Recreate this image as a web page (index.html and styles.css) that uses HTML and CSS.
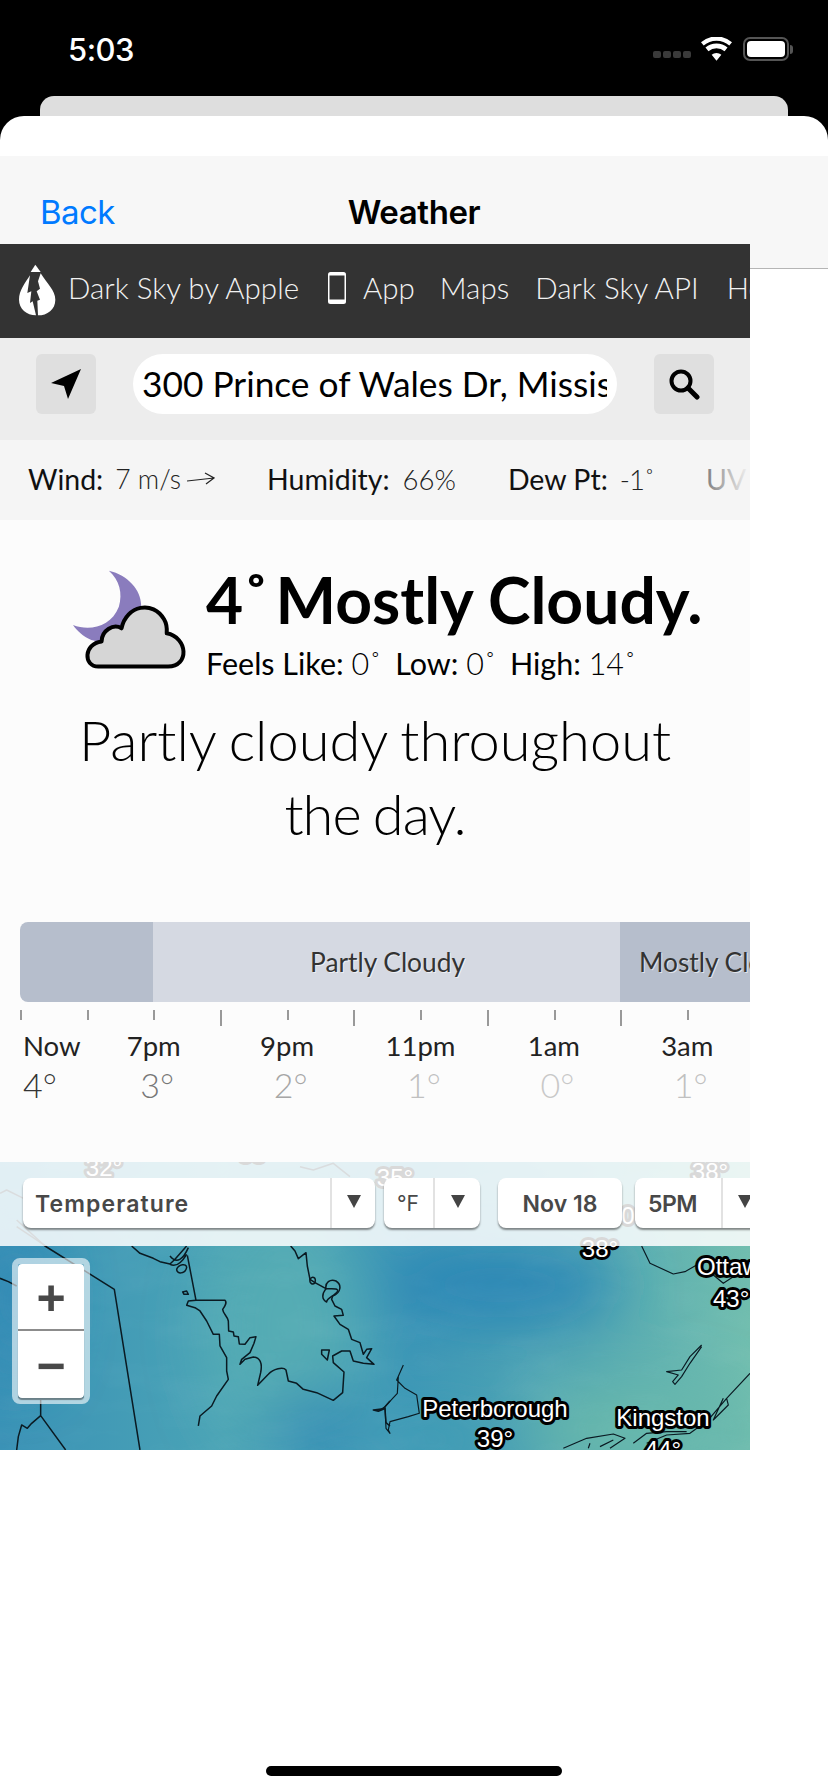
FILE: index.html
```html
<!DOCTYPE html>
<html lang="en">
<head>
<meta charset="utf-8">
<title>Weather</title>
<link rel="stylesheet" href="styles.css">
</head>
<body>
<div class="status">
  <span class="clock">5:03</span>
  <div class="status-icons">
    <div class="signal"><i></i><i></i><i></i><i></i></div>
    <svg class="wifi" viewBox="0 0 32 24"><path d="M16 24l-5-6a7.500 7.500 0 0 1 10 0zM7.700 14.200L4.600 10.500a17.500 17.500 0 0 1 22.800 0l-3.100 3.700a12.800 12.800 0 0 0-16.600 0zM2.800 8.300L0 5a24.500 24.500 0 0 1 32 0l-2.800 3.300a20.200 20.200 0 0 0-26.400 0z" fill="#fff"/></svg>
    <div class="battery"><div class="battery-fill"></div></div>
    <div class="battery-nub"></div>
  </div>
</div>
<div class="sheet-back"></div>
<div class="sheet">
  <div class="navbar">
    <span class="back">Back</span>
    <span class="nav-title">Weather</span>
    <span></span>
  </div>
  <main class="web">
    <nav class="site-nav">
      <svg class="logo" viewBox="0 0 180 192"><g fill="#fff"><path d="M76 20L92 42H62z"/><path d="M92 46C110 75 136 98 136 125 136 155 112 172 84 172L82 128 90 125 80 100 90 92 84 70z"/><path d="M60 52C45 75 27 98 27 125 27 152 50 172 78 172L68 130 60 135 64 100 52 105z"/></g></svg>
      <span class="nav-link brand">Dark Sky by Apple</span>
      <svg class="phone" viewBox="0 0 18 32"><rect width="18" height="32" rx="2.500" fill="#fff"/><rect x="1.500" y="3.500" width="15" height="24" fill="#333"/></svg>
      <span class="nav-link app">App</span>
      <span class="nav-link maps">Maps</span>
      <span class="nav-link api">Dark Sky API</span>
      <span class="nav-link help">Help</span>
    </nav>
    <div class="search">
      <button class="square-btn"><svg class="arrow-icon" viewBox="0 0 32 32"><path d="M31 1L1 15l13 3 4 13z" fill="#000"/></svg></button>
      <div class="address"><span class="address-text">300 Prince of Wales Dr, Mississauga, ON</span></div>
      <button class="square-btn"><svg class="search-icon" viewBox="0 0 32 32"><circle cx="13" cy="13" r="9.500" fill="none" stroke="#000" stroke-width="4"/><path d="M20 20l9 9" stroke="#000" stroke-width="5" stroke-linecap="round"/></svg></button>
    </div>
    <div class="stats">
      <div class="stat"><b>Wind:</b><span class="wind-value">7 m/s</span><svg class="wind-arrow" viewBox="0 0 28 14"><path d="M0 9l27-3M18 1l9 5-8 6" fill="none" stroke="#222" stroke-width="1.200"/></svg></div>
      <div class="stat"><b>Humidity:</b><span>66%</span></div>
      <div class="stat"><b>Dew Pt:</b><span class="dew-value">-1˚</span></div>
      <div class="stat"><b>UV Index:</b><span>0</span></div>
      <div class="stats-fade"></div>
    </div>
    <section class="summary">
      <div class="current">
        <svg class="weather-icon" viewBox="100 90 340 300"><path d="M208 92C265 105 305 150 305 195 305 250 230 320 155 300 130 290 112 272 100 255 150 275 215 260 238 200 250 160 240 120 208 92z" fill="#8a7cbd"/><path d="M176 380C131 380 131 312 186 305 186 272 221 250 246 265 261 195 341 180 374 238 384 255 382 280 382 280 446 292 451 380 386 380z" fill="#d6d6d6" stroke="#000" stroke-width="12" stroke-linejoin="round"/></svg>
        <div class="current-text">
          <h1 class="headline"><span class="deg">4˚ </span>Mostly Cloudy.</h1>
          <div class="feels"><b>Feels Like:</b> <span>0˚</span> <b class="gap">Low:</b> <span>0˚</span> <b class="gap">High:</b> <span>14˚</span></div>
        </div>
      </div>
      <p class="day-summary">Partly cloudy throughout <span class="tight">the day.</span></p>
    </section>
    <section class="timeline">
      <div class="bar">
        <div class="seg seg-dark seg-first"></div>
        <div class="seg seg-light"><span>Partly Cloudy</span></div>
        <div class="seg seg-dark seg-last"><span>Mostly Cloudy</span></div>
      </div>
      <div class="ticks">
        <i></i><i></i><i></i><i class="long"></i><i></i><i class="long"></i><i></i><i class="long"></i><i></i><i class="long"></i><i></i>
      </div>
      <div class="hours">
        <div class="hour now"><b>Now</b><span class="t1">4°</span></div>
        <div class="hour"><b>7pm</b><span class="t2">3°</span></div>
        <div class="hour"><b>9pm</b><span class="t3">2°</span></div>
        <div class="hour"><b>11pm</b><span class="t4">1°</span></div>
        <div class="hour"><b>1am</b><span class="t5">0°</span></div>
        <div class="hour"><b>3am</b><span class="t4">1°</span></div>
      </div>
    </section>
    <section class="map">
      <svg class="map-art" viewBox="0 1162 750 288" preserveAspectRatio="none">
        <defs>
          <linearGradient id="base" x1="0" y1="0" x2="1" y2="0">
            <stop offset="0" stop-color="#3a92b6"/><stop offset=".3" stop-color="#4ba4b6"/><stop offset=".55" stop-color="#3d97b6"/><stop offset=".8" stop-color="#56aab2"/><stop offset="1" stop-color="#70bdae"/>
          </linearGradient>
          <filter id="soft" x="-50%" y="-50%" width="200%" height="200%"><feGaussianBlur stdDeviation="30"/></filter>
          <filter id="grain" x="0" y="0" width="100%" height="100%"><feTurbulence type="fractalNoise" baseFrequency=".012 .035" numOctaves="3" seed="4"/><feColorMatrix values="0 0 0 0 1  0 0 0 0 1  0 0 0 0 1  1.400 0 0 0 -.55"/></filter>
        </defs>
        <rect x="0" y="1162" width="750" height="288" fill="url(#base)"/>
        <g filter="url(#soft)">
          <ellipse cx="285" cy="1330" rx="75" ry="120" fill="#55acb4"/>
          <ellipse cx="315" cy="1425" rx="45" ry="30" fill="#2f88b5"/>
          <ellipse cx="500" cy="1285" rx="120" ry="40" fill="#2b86b6"/>
          <ellipse cx="15" cy="1300" rx="35" ry="80" fill="#328ab5"/>
          <ellipse cx="640" cy="1430" rx="110" ry="45" fill="#68b8ac"/>
          <ellipse cx="430" cy="1440" rx="70" ry="25" fill="#439fb6"/>
        </g>
        <rect x="0" y="1162" width="750" height="288" filter="url(#grain)" opacity=".05"/>
        <g class="lines" transform="translate(0 1150) scale(.3333)">
          <path d="M50 210L135 288 343 418 420 900"/>
          <path d="M0 385L25 395 50 408"/>
          <path d="M122 750V797L197 900M122 797L95 820 82 835 65 825 55 860 50 900"/>
          <path d="M395 288L420 310 460 325 480 335 510 342 525 328 560 288"/>
          <path d="M0 130L20 120 60 140 120 170 170 175M900 50L940 60 1000 40 1050 80M1110 100L1200 90M50 230L140 290"/>
        </g>
        <g class="lines" transform="translate(170 1246) scale(.3333)">
          <path d="M52 28L78 163H165C172 170 165 180 158 190 160 205 172 210 175 225L176 255 190 258 192 270 205 272 208 294 225 295 240 275 258 272 252 292 240 320 215 340 210 355 225 340 250 333C270 335 278 350 272 380L263 418 295 385C310 368 340 362 348 372L355 405 380 412 400 430 440 440 490 463 518 440 522 378 490 350 488 330 515 315 540 315 550 345 580 352 612 355 590 335 605 308 590 310 580 325 570 290 545 280 535 250 510 235 492 210 520 208 515 190 495 180 485 160 488 150"/>
          <path d="M488 150C515 140 515 115 498 105 480 98 465 110 468 128L435 110 420 100 412 60 408 20 385 38 375 15 362 0"/>
          <path d="M468 128C480 130 505 125 503 135 495 150 470 155 470 168 455 160 455 145 468 128zM420 100C425 90 440 92 435 110 428 118 418 112 420 100z"/>
          <path d="M78 163L55 165 50 178 75 185 90 195 110 225 130 265 148 265 150 300 170 335 170 375 175 400 140 450 125 480 90 510 85 540"/>
          <path d="M38 138L50 135 55 145 42 145zM455 312L478 312 472 342 455 325zM20 70C25 55 50 50 50 65 45 85 20 85 20 70zM0 30C20 55 40 40 55 5M0 55C20 65 35 50 50 25"/>
          <path d="M660 465L640 488 610 492 625 496 645 488 648 530 660 540"/>
        </g>
        <g class="lines thin" transform="translate(380 1150) scale(.3333)">
          <path d="M70 645L50 690 75 715 110 735 118 790 85 800 30 815 25 840 30 850 18 835 15 770 0 780M55 680L52 730 15 770"/>
          <path d="M965 585L930 620 905 660 860 665 895 675 878 695 885 703 905 680 930 640 965 590"/>
          <path d="M1110 670L1040 745 985 810 930 850 860 855 800 880M1040 745L1045 765 1000 810 1030 745"/>
          <path d="M550 895L620 865 700 852 735 865 690 895M760 880L800 850 860 845 920 845M630 880L625 895M660 890L700 870"/>
          <path class="dash" d="M785 288L810 340 880 372 915 365 950 345M1000 375L1030 400 1060 380"/>
        </g>
        <g class="labels">
          <text x="104" y="1176">32°</text>
          <text x="252" y="1162">33</text>
          <text x="395" y="1186">35°</text>
          <text x="710" y="1180">38°</text>
          <text x="628" y="1224">0</text>
          <text x="600" y="1257">38°</text>
          <text class="start" x="697" y="1275">Ottawa</text>
          <text class="start" x="713" y="1307">43°</text>
          <text x="495" y="1417">Peterborough</text>
          <text x="495" y="1447">39°</text>
          <text x="663" y="1426">Kingston</text>
          <text x="663" y="1458">44°</text>
        </g>
      </svg>
      <div class="map-band">
        <div class="ctl ctl-metric"><b>Temperature</b><span class="caret"></span></div>
        <div class="ctl ctl-unit"><span class="unit">°F</span><span class="caret"></span></div>
        <div class="ctl ctl-date"><b>Nov 18</b></div>
        <div class="ctl ctl-time"><b>5PM</b><span class="caret"></span></div>
      </div>
      <div class="zoom-ctl">
        <div class="zoom-btn">+</div>
        <div class="zoom-btn">−</div>
      </div>
    </section>
  </main>
  <div class="home-area"><div class="home-bar"></div></div>
</div>
</body>
</html>
```
FILE: styles.css
```css
* { box-sizing: border-box; }
html, body { margin: 0; height: 100%; }
body { width: 828px; height: 1792px; background: #000; overflow: hidden; font-family: Lato, "Noto Sans", sans-serif; color: #000; display: flex; flex-direction: column; }

.status { height: 96px; flex: none; display: flex; justify-content: space-between; padding: 31px 35px 0 68px; align-items: flex-start; }
.clock { font-family: Inter, Roboto, sans-serif; font-weight: 500; font-size: 31px; line-height: 38px; color: #fff; letter-spacing: -.5px; }
.status-icons { display: flex; align-items: center; margin-top: 6px; height: 24px; }
.signal { display: flex; gap: 2px; margin: 10px 10px 0 0; }
.signal i { width: 8px; height: 7px; background: #3a3a3a; border-radius: 2px; display: block; }
.wifi { width: 31px; height: 24px; margin-right: 11px; }
.battery { width: 46px; height: 24px; border: 2px solid #555; border-radius: 7px; padding: 2px; }
.battery-fill { width: 100%; height: 100%; background: #fff; border-radius: 4px; }
.battery-nub { width: 3px; height: 9px; background: #555; border-radius: 0 3px 3px 0; margin-left: 1px; }

.sheet-back { height: 20px; flex: none; margin: 0 40px; background: #dedede; border-radius: 14px 14px 0 0; }
.sheet { flex: 1; background: #fff; border-radius: 24px 24px 0 0; padding-top: 40px; display: flex; flex-direction: column; }

.navbar { height: 113px; flex: none; background: #f7f7f7; border-bottom: 1px solid #b5b5b5; display: grid; grid-template-columns: 1fr auto 1fr; padding: 36px 40px 0; font-family: Inter, Roboto, sans-serif; font-size: 33px; line-height: 40px; }
.back { color: #007aff; letter-spacing: -.6px; }
.nav-title { font-weight: 600; letter-spacing: -.4px; }

.web { width: 750px; height: 1206px; flex: none; margin-top: -25px; position: relative; background: #fcfcfc; overflow: hidden; display: flex; flex-direction: column; }

.site-nav { height: 94px; flex: none; background: #333; display: flex; align-items: center; padding: 0 0 6px 10px; color: #fff; white-space: nowrap; }
.logo { width: 60px; height: 64px; flex: none; margin-top: 4px; }
.phone { width: 18px; height: 32px; flex: none; margin-left: 29px; }
.nav-link { font-weight: 300; font-size: 29.500px; line-height: 36px; color: #f2f2f2; flex: none; }
.brand { margin-left: -2px; }
.app { margin-left: 17px; }
.maps { margin-left: 25px; }
.api { margin-left: 26px; }
.help { margin-left: 28px; }

.search { height: 102px; flex: none; background: #ededed; display: flex; align-items: center; padding: 0 36px 10px; }
.square-btn { width: 60px; height: 60px; flex: none; border: 0; padding: 0; background: #dfdfdf; border-radius: 6px; display: flex; align-items: center; justify-content: center; }
.arrow-icon { width: 32px; height: 32px; }
.search-icon { width: 32px; height: 32px; }
.address { width: 484px; height: 60px; flex: none; margin: 0 37px; background: #fff; border-radius: 30px; padding: 0 10px 0 9px; overflow: hidden; display: flex; align-items: center; white-space: nowrap; }
.address-text { font-size: 35.300px; line-height: 42px; width: 100%; overflow: hidden; display: block; }

.stats { height: 80px; flex: none; background: #f5f5f5; display: flex; align-items: center; padding: 0 0 2px 28px; gap: 52px; white-space: nowrap; font-size: 28.500px; position: relative; overflow: hidden; }
.stat { display: flex; align-items: center; flex: none; }
.stat b { font-weight: 400; color: #111; }
.stat span { font-weight: 300; margin-left: 13px; color: #222; font-size: 27.500px; }
.stat .wind-value { margin-left: 12px; font-size: 26.500px; }
.stat .dew-value { margin-left: 12px; letter-spacing: -1px; }
.wind-arrow { width: 28px; height: 14px; margin-left: 6px; }
.stats-fade { position: absolute; right: 0; top: 0; bottom: 0; width: 60px; background: linear-gradient(to right, rgba(245,245,245,.3), #f5f5f5); }

.summary { height: 402px; flex: none; padding-top: 50px; }
.current { display: flex; align-items: flex-start; padding-left: 73px; height: 113px; }
.weather-icon { width: 113px; height: 100px; flex: none; }
.current-text { margin: -8px 0 0 20px; }
.headline { margin: 0; font-weight: 700; font-size: 64.200px; line-height: 76px; white-space: pre; }
.deg { word-spacing: -9px; }
.feels { font-size: 30.500px; line-height: 40px; white-space: nowrap; margin-top: 5px; }
.feels b { font-weight: 400; }
.feels span { font-weight: 300; }
.feels .gap { margin-left: 6px; }
.day-summary { margin: 20px 60px 0; text-align: center; font-weight: 300; font-size: 56px; line-height: 74px; word-spacing: -2px; }
.tight { letter-spacing: -1px; }

.timeline { flex: none; height: 240px; padding-left: 20px; overflow: hidden; }
.bar { height: 80px; display: flex; width: 800px; }
.seg { height: 80px; flex: none; display: flex; align-items: center; font-size: 26.300px; color: #333; text-shadow: 1px 1px 0 rgba(255,255,255,.6); white-space: nowrap; }
.seg-dark { background: #b6becc; }
.seg-light { background: #d5d9e2; width: 467px; justify-content: center; padding-left: 2px; }
.seg-first { width: 133px; border-radius: 8px 0 0 8px; }
.seg-last { width: 200px; padding-left: 19px; }
.ticks { display: flex; height: 24px; margin-top: 8px; width: 800px; }
.ticks i { width: 66.700px; flex: none; }
.ticks i::before { content: ""; display: block; width: 2px; height: 10px; background: #999; }
.ticks i.long::before { height: 16px; }
.hours { display: flex; width: 800px; margin-left: -20px; }
.hour { width: 133.400px; flex: none; display: flex; flex-direction: column; align-items: center; }
.hour b { font-weight: 400; font-size: 27.500px; line-height: 38px; color: #222; margin-top: -7px; }
.hour span { font-weight: 300; font-size: 34px; line-height: 40px; margin-left: 7px; }
.hour.now { width: 87px; padding-left: 23px; align-items: flex-start; }
.hour.now span { margin-left: 0; }
.t1 { color: #333; }
.t2 { color: #777; }
.t3 { color: #a6a6a6; }
.t4 { color: #c0c0c0; }
.t5 { color: #c8c8c8; }

.map { flex: 1; position: relative; overflow: hidden; }
.map-art { display: block; width: 750px; height: 288px; }
.lines path { fill: none; stroke: #0a1a22; stroke-width: 4.500; stroke-linejoin: round; }
.lines.thin path { stroke-width: 3.500; }
.labels text { font-family: "Liberation Sans", Arial, sans-serif; font-size: 24px; fill: #fff; stroke: #000; stroke-width: 6px; paint-order: stroke; stroke-linejoin: round; text-anchor: middle; }
.labels text.start { text-anchor: start; }
.map-band { position: absolute; left: 0; right: 0; top: 0; height: 84px; background: rgba(255,255,255,.85); overflow: hidden; }
.ctl { position: absolute; top: 16px; height: 50px; padding-top: 1px; background: #fff; border-radius: 8px; box-shadow: 0 2px 2px rgba(0,0,0,.45); display: flex; align-items: center; font-family: Inter, Roboto, sans-serif; font-size: 23px; color: #484848; white-space: nowrap; }
.ctl b { font-weight: 600; }
.caret { position: absolute; top: 0; bottom: 0; right: 0; width: 45px; border-left: 2px solid #e2e2e2; }
.caret::after { content: ""; position: absolute; left: 50%; top: 17px; margin-left: -7px; border: 7px solid transparent; border-top: 13px solid #444; border-bottom: 0; }
.ctl-metric { left: 23px; width: 352px; padding-left: 12px; letter-spacing: 1.100px; }
.ctl-unit { left: 384px; width: 96px; padding-left: 13px; font-size: 21px; }
.ctl-unit .caret { width: 47px; }
.unit { font-weight: 400; }
.ctl-date { left: 498px; width: 124px; justify-content: center; }
.ctl-time { left: 635px; width: 131px; padding-left: 13px; letter-spacing: -.5px; }
.zoom-ctl { position: absolute; left: 12px; top: 96px; width: 78px; height: 146px; border: 6px solid rgba(255,255,255,.6); border-radius: 8px; background-clip: padding-box; }
.zoom-btn { height: 67px; padding-top: 3px; background: #fff; display: flex; align-items: center; justify-content: center; font-family: "Liberation Sans", sans-serif; font-weight: 700; font-size: 50px; line-height: 1; color: #484848; }
.zoom-btn:first-child { border-radius: 4px 4px 0 0; border-bottom: 2px solid #8c8c8c; }
.zoom-btn:last-child { border-radius: 0 0 4px 4px; box-shadow: 0 2px 1px rgba(0,0,0,.4); }

.home-area { flex: 1; display: flex; justify-content: center; align-items: flex-end; padding-bottom: 16px; }
.home-bar { width: 296px; height: 10px; border-radius: 5px; background: #000; }
```
